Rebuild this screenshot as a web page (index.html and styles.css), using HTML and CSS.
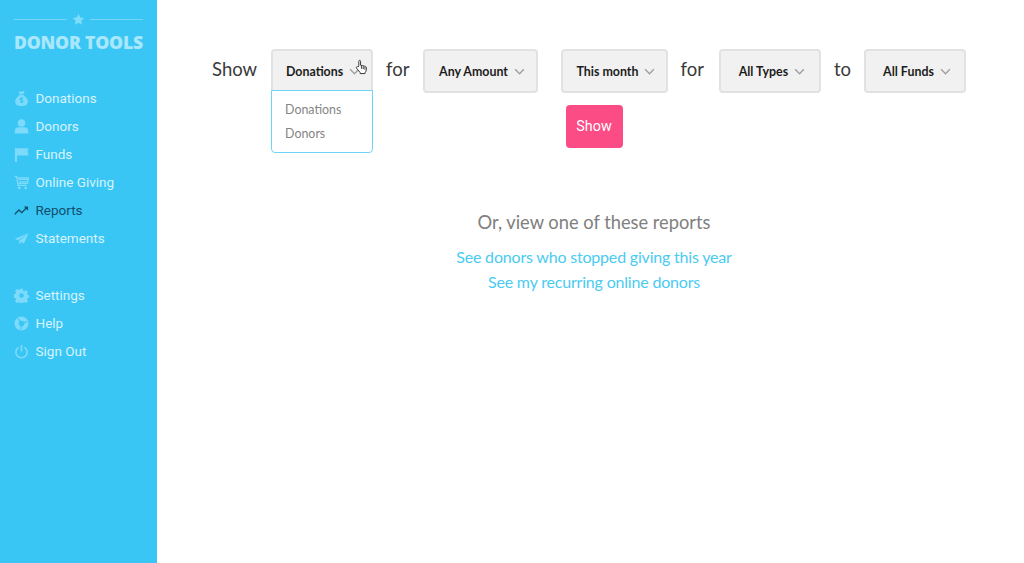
FILE: index.html
```html
<!DOCTYPE html>
<html lang="en">
<head>
  <meta charset="UTF-8">
  <title>Donor Tools - Reports</title>
  <link rel="stylesheet" href="styles.css">
</head>
<body>
  <div class="sidebar">
    <div class="logo">
      <div class="logo-top">
        <span class="logo-line"></span>
        <svg class="logo-star" viewBox="0 0 24 24"><path d="M12 1.500l3.200 7 7.600.8-5.700 5.100 1.600 7.500L12 18.100l-6.700 3.800 1.600-7.500L1.200 9.300l7.600-.8z"/></svg>
        <span class="logo-line"></span>
      </div>
      <div class="logo-text">DONOR TOOLS</div>
    </div>

    <div class="nav">
      <a class="nav-item">
        <svg class="nav-icon" viewBox="0 0 16 16"><path d="M4.500.3c1.200.6 2.300.6 3.500.2 1.200-.4 2.300-.4 3.500-.2L9.900 3.400H6.100zM6 4.200h4c2.600 1.800 4.800 4.500 4.800 7.200 0 3-2.600 4.500-6.800 4.500s-6.800-1.500-6.800-4.500c0-2.700 2.200-5.400 4.800-7.200z"/><path class="cut" d="M9.600 8.100c-.4-.6-3-.8-3 .6 0 1.500 3 .8 3 2.300 0 1.400-2.700 1.200-3.200.5M8 6.700v6"/></svg>
        Donations
      </a>
      <a class="nav-item">
        <svg class="nav-icon" viewBox="0 0 16 16"><circle cx="8" cy="4.300" r="4"/><path d="M.8 15.500v-3C.8 10 3 8.800 5 8.800h6c2 0 4.200 1.200 4.200 3.700v3z"/></svg>
        Donors
      </a>
      <a class="nav-item">
        <svg class="nav-icon" viewBox="0 0 16 16"><path d="M1 1h2.200v15H1zM3.200 1.200h12.300l-1 3.300 1 4.500H3.200z"/></svg>
        Funds
      </a>
      <a class="nav-item">
        <svg class="nav-icon" viewBox="0 0 16 16"><path class="stroke" d="M.5 1.500h2.300l1.500 9.500h9.200M5 4.700h9.500M5 7.300h9"/><path class="stroke" d="M3.500 3.200h12l-1.300 5.800H4.500"/><circle cx="5.500" cy="13.800" r="1.500"/><circle cx="12.500" cy="13.800" r="1.500"/></svg>
        Online Giving
      </a>
      <a class="nav-item active">
        <svg class="nav-icon" viewBox="0 0 16 16"><path class="stroke" d="M.8 12l4.500-4.500 3 2.800 5-5.300"/><path d="M10.500 3.800H15v4.500z"/></svg>
        Reports
      </a>
      <a class="nav-item">
        <svg class="nav-icon" viewBox="0 0 16 16"><path d="M15.500 2.500L.8 8.200l3.500 1.700zM15.500 2.500L5.400 10.500v3.700l2.200-2.500 3 1.500z"/></svg>
        Statements
      </a>
    </div>

    <div class="nav nav-bottom">
      <a class="nav-item">
        <svg class="nav-icon" viewBox="0 0 16 16"><path fill-rule="evenodd" d="M6.600.8h2.800l.4 2 1.300.6 1.800-1.100 2 2-1.100 1.800.6 1.300 2 .4v2.800l-2 .4-.6 1.300 1.100 1.800-2 2-1.800-1.100-1.300.6-.4 2H6.600l-.4-2-1.300-.6-1.800 1.100-2-2 1.100-1.800-.6-1.300-2-.4V6.600l2-.4.6-1.300-1.100-1.800 2-2 1.800 1.100 1.300-.6zM8 5.500a2.500 2.500 0 100 5 2.500 2.500 0 000-5z"/></svg>
        Settings
      </a>
      <a class="nav-item">
        <svg class="nav-icon" viewBox="0 0 16 16"><path fill-rule="evenodd" d="M8 .5a7.500 7.500 0 110 15 7.500 7.500 0 010-15zM8 5a3 3 0 100 6 3 3 0 000-6z"/><path class="cut" d="M4 2.500l2.500 3M14 6l-3.500 1M7 14.500l1-3.500"/></svg>
        Help
      </a>
      <a class="nav-item">
        <svg class="nav-icon" viewBox="0 0 16 16"><path class="stroke wide" d="M4.800 3.600a6 6 0 106.400 0M8 1v7"/></svg>
        Sign Out
      </a>
    </div>
  </div>

  <div class="main">
    <div class="filters">
      <span class="word word-show">Show</span>
      <div class="select-wrap">
        <div class="select select-type">Donations <svg class="chevron" viewBox="0 0 12 8"><path d="M1 1.500l5 5 5-5"/></svg></div>
        <div class="dropdown">
          <div class="dropdown-item">Donations</div>
          <div class="dropdown-item">Donors</div>
        </div>
        <svg class="cursor" viewBox="0 0 16 18"><path d="M5.500 8V2.500c0-1.500 2-1.500 2 0V7l5 1.200c1.200.3 1.800 1 1.800 2.200l-.5 3c-.2 1-.6 1.600-1.200 2.100v1H7v-1.200L3 10.500c-1-1.200.5-2.500 1.500-1.500z"/><path d="M8.500 8v3M10.500 8.500v3M12.500 9v3"/></svg>
      </div>
      <span class="word word-for">for</span>
      <div class="select select-amount">Any Amount <svg class="chevron" viewBox="0 0 12 8"><path d="M1 1.500l5 5 5-5"/></svg></div>
      <div class="select select-month">This month <svg class="chevron" viewBox="0 0 12 8"><path d="M1 1.500l5 5 5-5"/></svg></div>
      <span class="word word-for word-for-types">for</span>
      <div class="select select-small">All Types <svg class="chevron" viewBox="0 0 12 8"><path d="M1 1.500l5 5 5-5"/></svg></div>
      <span class="word word-to">to</span>
      <div class="select select-small">All Funds <svg class="chevron" viewBox="0 0 12 8"><path d="M1 1.500l5 5 5-5"/></svg></div>
    </div>

    <div class="submit-row">
      <button class="show-button">Show</button>
    </div>

    <div class="reports">
      <h2>Or, view one of these reports</h2>
      <a href="#">See donors who stopped giving this year</a>
      <a href="#">See my recurring online donors</a>
    </div>
  </div>
</body>
</html>
```

FILE: styles.css
```css
* { box-sizing: border-box; }
html, body { height: 100%; }
body {
  margin: 0;
  display: flex;
  overflow: hidden;
  background: #fff;
  font-family: 'Lato', sans-serif;
  color: #333;
}

/* sidebar */
.sidebar {
  width: 157px;
  flex: none;
  background: #3ac6f5;
  padding: 12px 14px 0;
}
.logo-top {
  display: flex;
  align-items: center;
  gap: 5px;
  height: 14px;
}
.logo-line {
  flex: 1;
  height: 1px;
  background: rgba(255, 255, 255, 0.3);
}
.logo-star {
  width: 13px;
  height: 13px;
  fill: #7fdcfb;
}
.logo-text {
  margin-top: 7px;
  font-family: 'Open Sans', sans-serif;
  font-weight: 800;
  font-size: 17.7px;
  line-height: 18px;
  letter-spacing: -0.25px;
  white-space: nowrap;
  color: #a8e7fc;
}
.nav { margin-top: 33px; }
.nav-bottom { margin-top: 29px; }
.nav-item {
  display: flex;
  align-items: center;
  gap: 6.5px;
  height: 28px;
  font-family: 'Roboto', sans-serif;
  font-size: 13.5px;
  color: #d6f3fe;
}
.nav-item.active { color: #0f4f6c; }
.nav-icon {
  width: 15px;
  height: 15px;
  flex: none;
  fill: #7cdafa;
}
.nav-icon .cut {
  fill: none;
  stroke: #3ac6f5;
  stroke-width: 1.2;
}
.nav-icon .stroke {
  fill: none;
  stroke: #7cdafa;
  stroke-width: 1.4;
}
.nav-icon .wide { stroke-width: 1.8; }
.nav-item.active .nav-icon { fill: #0f4f6c; }
.nav-item.active .nav-icon .stroke { stroke: #0f4f6c; }

/* filters */
.main {
  flex: 1;
  padding: 49px 48px 0 55px;
}
.filters {
  display: flex;
  align-items: flex-start;
}
.word {
  font-size: 18.5px;
  line-height: 40px;
  color: #3a3a3a;
}
.word-show { margin-right: 14px; }
.word-for { margin: 0 13px; }
.word-for-types { margin-right: 15px; }
.word-to { margin: 0 13px; }
.select-wrap { position: relative; }
.select {
  display: flex;
  align-items: center;
  justify-content: center;
  gap: 6px;
  height: 44px;
  padding-left: 4px;
  background: #f1f1f1;
  border: 2px solid #e2e2e2;
  border-radius: 4px;
  font-size: 12.4px;
  font-weight: 700;
  color: #1c1c1c;
  white-space: nowrap;
}
.select-type {
  width: 102px;
  padding-left: 2px;
  border-bottom-left-radius: 0;
  border-bottom-right-radius: 0;
}
.select-amount { width: 115px; margin-right: 23px; }
.select-month { width: 107px; }
.select-small { width: 102px; }
.chevron {
  width: 11px;
  height: 7px;
  fill: none;
  stroke: #9f9f9f;
  stroke-width: 1.6;
}
.dropdown {
  position: absolute;
  left: 0;
  top: 41px;
  width: 102px;
  height: 63px;
  padding: 7px 13px;
  background: #fff;
  border: 1px solid #6fd5f7;
  border-radius: 0 0 4px 4px;
}
.dropdown-item {
  font-size: 12.4px;
  line-height: 24px;
  color: #858585;
}
.cursor {
  position: absolute;
  left: 83px;
  top: 10px;
  width: 14px;
  height: 16px;
  fill: #fff;
  stroke: #333;
  stroke-width: 1.1;
}

.submit-row {
  display: flex;
  justify-content: center;
  margin-top: 12px;
}
.show-button {
  width: 57px;
  height: 43px;
  padding: 0 0 2px;
  background: #fc4c86;
  border: none;
  border-radius: 4px;
  font-family: 'Roboto', sans-serif;
  font-size: 14.3px;
  color: #fff;
}

/* report links */
.reports {
  margin-top: 62px;
  text-align: center;
}
.reports h2 {
  margin: 0 0 10px;
  font-size: 18.3px;
  font-weight: 400;
  line-height: 24px;
  color: #808080;
}
.reports a {
  display: block;
  font-size: 16px;
  line-height: 25px;
  letter-spacing: -0.19px;
  color: #4acbf1;
  text-decoration: none;
}
```
